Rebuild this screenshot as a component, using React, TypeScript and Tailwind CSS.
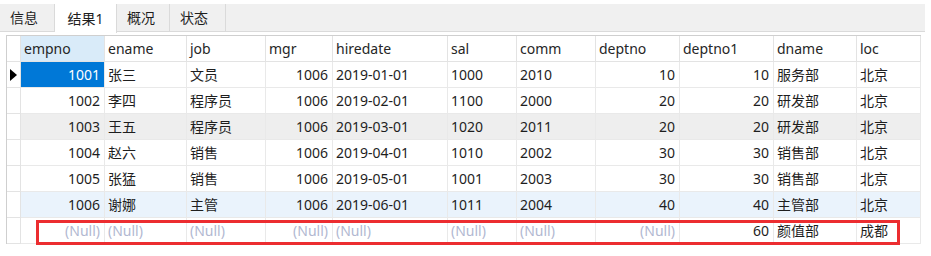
import React from "react";

const cols = [
  { key: "empno", right: true },
  { key: "ename" },
  { key: "job" },
  { key: "mgr", right: true },
  { key: "hiredate" },
  { key: "sal" },
  { key: "comm" },
  { key: "deptno", right: true },
  { key: "deptno1", right: true },
  { key: "dname" },
  { key: "loc" },
];

const N = "(Null)";

const rows: string[][] = [
  ["1001", "张三", "文员", "1006", "2019-01-01", "1000", "2010", "10", "10", "服务部", "北京"],
  ["1002", "李四", "程序员", "1006", "2019-02-01", "1100", "2000", "20", "20", "研发部", "北京"],
  ["1003", "王五", "程序员", "1006", "2019-03-01", "1020", "2011", "20", "20", "研发部", "北京"],
  ["1004", "赵六", "销售", "1006", "2019-04-01", "1010", "2002", "30", "30", "销售部", "北京"],
  ["1005", "张猛", "销售", "1006", "2019-05-01", "1001", "2003", "30", "30", "销售部", "北京"],
  ["1006", "谢娜", "主管", "1006", "2019-06-01", "1011", "2004", "40", "40", "主管部", "北京"],
  [N, N, N, N, N, N, N, N, "60", "颜值部", "成都"],
];

const tabs = ["信息", "结果1", "概况", "状态"];
const tabW = ["w-[55px]", "w-[62px]", "w-[53px]", "w-[56px]"];

export default function App() {
  return (
    <div
      className="w-[931px] h-[256px] bg-white text-[14px] text-[#1e1e1e] overflow-hidden"
      style={{ fontFamily: '"Noto Sans", "Noto Sans CJK SC", sans-serif' }}
    >
      <div className="pt-[4px] pr-[6px]">
        <div className="flex h-[28px] bg-[#f0f0f0] border-b border-[#dadada]">
          {tabs.map((t, i) => (
            <div
              key={t}
              className={
                "flex items-center border-r border-[#dadada] " +
                tabW[i] +
                (i === 1
                  ? " bg-white justify-center -mb-px h-[29px]"
                  : " pl-[10px]")
              }
            >
              {t}
            </div>
          ))}
        </div>
      </div>

      <div className="relative mt-[3px] ml-[6px] w-[915px] border-l border-t border-[#cfcfcf]">
        <div className="grid grid-cols-[14px_84px_82px_79px_67px_115px_69px_79px_84px_94px_83px_64px]">
          <div className="h-[26px] border-r border-b border-[#e3e3e3]" />
          {cols.map((c, i) => (
            <div
              key={c.key}
              className={
                "h-[26px] flex items-center pl-[3px] border-r border-b border-[#e3e3e3] text-[#262626] " +
                (i === 0 ? "bg-[#d9ebf9]" : "bg-white")
              }
            >
              {c.key}
            </div>
          ))}

          {rows.map((r, ri) => {
            const bg =
              ri === 2 ? "bg-[#eeeeee]" : ri === 5 ? "bg-[#eaf3fc]" : "bg-white";
            return (
              <React.Fragment key={ri}>
                <div className="h-[26px] flex items-center justify-center border-r border-b border-[#e3e3e3] bg-white">
                  {ri === 0 && (
                    <svg width="7" height="12" viewBox="0 0 7 12">
                      <path d="M0 0 L7 6 L0 12 Z" fill="#000" />
                    </svg>
                  )}
                </div>
                {r.map((v, ci) => {
                  const sel = ri === 0 && ci === 0;
                  const isNull = v === N;
                  return (
                    <div
                      key={ci}
                      className={
                        "h-[26px] flex items-center border-r border-b border-[#e9e9e9] whitespace-nowrap " +
                        (cols[ci].right || (isNull && ci !== 1 && ci !== 2 && ci !== 4 && ci !== 5 && ci !== 6)
                          ? "justify-end pr-[4px] "
                          : "pl-[3px] ") +
                        (sel
                          ? "bg-[#0078d7] text-white"
                          : bg + (isNull ? " text-[#b1b8d1]" : ""))
                      }
                    >
                      {v}
                    </div>
                  );
                })}
              </React.Fragment>
            );
          })}
        </div>

        <div className="absolute left-[29px] top-[184px] w-[864px] h-[25px] border-[3px] border-[#ec2d30]" />
      </div>
    </div>
  );
}
